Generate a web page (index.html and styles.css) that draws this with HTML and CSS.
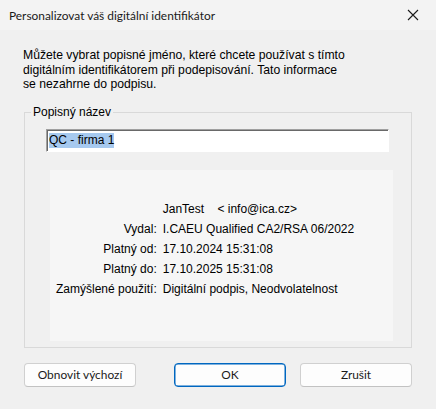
FILE: index.html
```html
<!DOCTYPE html>
<html lang="cs">
<head>
<meta charset="utf-8">
<title>Personalizovat váš digitální identifikátor</title>
<link rel="stylesheet" href="styles.css">
</head>
<body>
<div class="window">
  <div class="titlebar">
    <span class="title">Personalizovat váš digitální identifikátor</span>
    <svg class="close" width="12" height="12" viewBox="0 0 12 12"><path d="M1 1 L11 11 M11 1 L1 11" stroke="#1a1a1a" stroke-width="1.1" fill="none"/></svg>
  </div>
  <div class="content">
    <p class="desc">Můžete vybrat popisné jméno, které chcete používat s tímto<br>digitálním identifikátorem při podepisování. Tato informace<br>se nezahrne do podpisu.</p>
    <fieldset class="group">
      <legend>Popisný název</legend>
      <div class="input"><span class="sel">QC - firma 1</span></div>
      <div class="panel">
        <div class="grid">
          <span class="lbl"></span><span class="val">JanTest&nbsp;&nbsp;&nbsp;&nbsp;&lt; info@ica.cz&gt;</span>
          <span class="lbl">Vydal:</span><span class="val">I.CAEU Qualified CA2/RSA 06/2022</span>
          <span class="lbl">Platný od:</span><span class="val">17.10.2024 15:31:08</span>
          <span class="lbl">Platný do:</span><span class="val">17.10.2025 15:31:08</span>
          <span class="lbl">Zamýšlené použití:</span><span class="val">Digitální podpis, Neodvolatelnost</span>
        </div>
      </div>
    </fieldset>
    <div class="buttons">
      <button class="btn">Obnovit výchozí</button>
      <button class="btn ok">OK</button>
      <button class="btn">Zrušit</button>
    </div>
  </div>
</div>
</body>
</html>
```
FILE: styles.css
```css
html, body {
  margin: 0;
  padding: 0;
  background: #f0f0f0;
}
.window {
  width: 436px;
  height: 409px;
  background: #f0f0f0;
  font-family: "Liberation Sans", Arial, sans-serif;
  font-size: 12px;
  color: #000;
  overflow: hidden;
}
.titlebar {
  height: 30px;
  display: flex;
  align-items: center;
  justify-content: space-between;
  padding: 0 17px 0 9px;
  background: #f3f3f3;
}
.title {
  font-family: Lato, "Open Sans", sans-serif;
  font-size: 11.9px;
  color: #1a1a1a;
}
.close {
  display: block;
}
.content {
  padding: 0 24px;
}
.desc {
  margin: 18px 0 0 -1px;
  line-height: 14.5px;
  font-size: 12.2px;
}
.group {
  margin: 13px 0 0 0;
  padding: 9px 21px 12px 6px;
  border: 1px solid #d9d9d9;
  height: 243px;
  box-sizing: border-box;
  min-width: 0;
}
.group legend {
  padding: 0 2px;
  line-height: 15px;
}
.input {
  margin-left: 15px;
  margin-right: 1px;
  height: 23px;
  box-sizing: border-box;
  background: #fff;
  border-top: 1px solid #a0a0a0;
  border-left: 1px solid #a0a0a0;
  border-right: 1px solid #fff;
  border-bottom: 1px solid #fff;
  box-shadow: inset 1px 1px 0 #696969;
  padding: 3px 0 0 2px;
  line-height: 15px;
}
.sel {
  background: #a6c9ef;
  display: inline-block;
}
.panel {
  margin: 18px -3px 0 19px;
  background: #f6f6f6;
  height: 171px;
  box-sizing: border-box;
  padding: 32px 0 0 6px;
}
.grid {
  display: grid;
  grid-template-columns: max-content max-content;
  column-gap: 6px;
  row-gap: 5px;
  line-height: 15px;
}
.lbl {
  text-align: right;
}
.buttons {
  display: flex;
  gap: 14px;
  margin-top: 15px;
}
.btn {
  width: 112px;
  height: 24px;
  box-sizing: border-box;
  background: #fdfdfd;
  border: 1px solid #d0d0d0;
  border-bottom-color: #c2c2c2;
  border-radius: 4px;
  font-family: Lato, "Open Sans", sans-serif;
  font-size: 11.9px;
  color: #1a1a1a;
  padding: 0;
}
.btn.ok {
  margin-left: auto;
  border: 1px solid #0067c0;
  box-shadow: inset 0 0 0 0.5px #0067c0;
}
```
